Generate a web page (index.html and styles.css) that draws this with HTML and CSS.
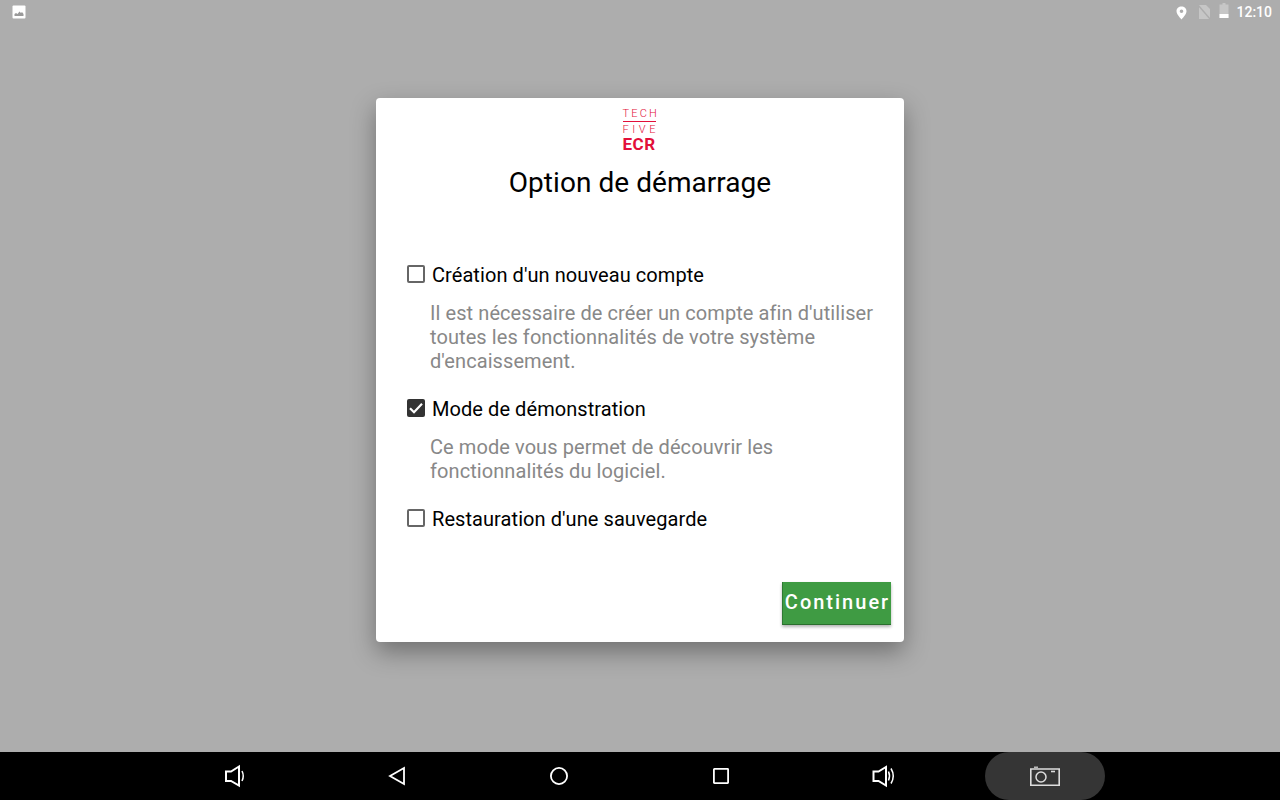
FILE: index.html
```html
<!DOCTYPE html>
<html lang="fr">
<head>
  <meta charset="UTF-8" />
  <meta name="viewport" content="width=device-width, initial-scale=1.0" />
  <title>Option de démarrage</title>
  <link rel="stylesheet" href="styles.css">
</head>
<body>
  <header class="status-bar">
    <svg class="status-photo" width="14" height="14" viewBox="0 0 14 14">
      <rect x="0.5" y="0.5" width="13" height="13" rx="1" fill="#fff"/>
      <path d="M2.5 11 V9 L4 8 L5.5 9 L7.5 6.5 L9 8 L10 7 L11.5 9 V11 Z" fill="#9a9a9a"/>
    </svg>
    <div class="status-right">
      <svg width="12" height="18" viewBox="0 0 12 18">
        <path fill-rule="evenodd" d="M5.5 3.5 C2.7 3.5 0.5 5.5 0.5 8.3 C0.5 11.5 5.5 16.5 5.5 16.5 S10.5 11.5 10.5 8.3 C10.5 5.5 8.3 3.5 5.5 3.5 Z M5.5 6.5 A1.8 1.8 0 1 1 5.5 10.1 A1.8 1.8 0 1 1 5.5 6.5 Z" fill="#fff"/>
      </svg>
      <svg class="status-sim" width="14" height="18" viewBox="0 0 14 18">
        <path d="M2 2 H9 L13 6 V16 H2 Z" fill="#c6c6c6"/>
        <path d="M1 2 L13.5 16.5" stroke="#adadad" stroke-width="1.4"/>
      </svg>
      <svg class="status-battery" width="10" height="18" viewBox="0 0 10 18">
        <path d="M3.5 0 H6.5 V1.5 H9.5 V15 H0.5 V1.5 H3.5 Z" fill="#c6c6c6"/>
        <rect x="0.5" y="11" width="9" height="4" fill="#fff"/>
      </svg>
      <span class="status-time">12:10</span>
    </div>
  </header>

  <main class="screen">
    <section class="dialog">
      <div class="logo">
        <span class="logo-line logo-tech">TECH</span>
        <span class="logo-line logo-five">FIVE</span>
        <span class="logo-ecr">ECR</span>
      </div>
      <h1 class="dialog-title">Option de démarrage</h1>

      <div class="options">
        <label class="option">
          <span class="checkbox"></span>
          <span>Création d'un nouveau compte</span>
        </label>
        <p class="option-text">Il est nécessaire de créer un compte afin d'utiliser toutes les fonctionnalités de votre système d'encaissement.</p>

        <label class="option">
          <span class="checkbox checked">
            <svg width="18" height="18" viewBox="0 0 18 18">
              <path d="M3 9.2 L7 13.2 L15 4.8" fill="none" stroke="#fff" stroke-width="2.2"/>
            </svg>
          </span>
          <span>Mode de démonstration</span>
        </label>
        <p class="option-text">Ce mode vous permet de découvrir les fonctionnalités du logiciel.</p>

        <label class="option">
          <span class="checkbox"></span>
          <span>Restauration d'une sauvegarde</span>
        </label>
      </div>

      <div class="dialog-actions">
        <button class="btn-continue">Continuer</button>
      </div>
    </section>
  </main>

  <nav class="nav-bar">
    <div class="nav-item">
      <svg width="22" height="24" viewBox="0 0 22 24" fill="none" stroke="#fff">
        <path d="M2 7.5 H7 L15 2.5 V21.5 L7 17 H2 Z" stroke-width="2"/>
        <path d="M18 7 Q20.5 12 18 17" stroke-width="1.5"/>
      </svg>
    </div>
    <div class="nav-item">
      <svg width="18" height="20" viewBox="0 0 18 20" fill="none" stroke="#fff" stroke-width="1.8">
        <path d="M2 10 L16 2 V18 Z"/>
      </svg>
    </div>
    <div class="nav-item">
      <svg width="20" height="20" viewBox="0 0 20 20" fill="none" stroke="#fff" stroke-width="1.8">
        <circle cx="10" cy="10" r="8.1"/>
      </svg>
    </div>
    <div class="nav-item">
      <svg width="18" height="18" viewBox="0 0 18 18" fill="none" stroke="#fff" stroke-width="1.8">
        <rect x="1.9" y="1.9" width="14.2" height="14.2" rx="0.5"/>
      </svg>
    </div>
    <div class="nav-item">
      <svg width="26" height="24" viewBox="0 0 26 24" fill="none" stroke="#fff">
        <path d="M3.5 7.5 H8.5 L16 3 V21.5 L8.5 17 H3.5 Z" stroke-width="2"/>
        <path d="M18.5 7.5 Q20.5 12 18.5 16.5" stroke-width="1.5"/>
        <path d="M21 4.5 Q25.5 12 21 19.5" stroke-width="1.5"/>
      </svg>
    </div>
    <div class="nav-pill">
      <svg width="30" height="20" viewBox="0 0 30 20" fill="none" stroke="#ddd">
        <path d="M0.8 3 H29.2 V19.2 H0.8 Z" stroke-width="1.6"/>
        <path d="M4 1.2 H8" stroke-width="1.2"/>
        <circle cx="11" cy="11" r="5" stroke-width="1.5"/>
        <path d="M21 5.5 H25" stroke-width="1.6"/>
      </svg>
    </div>
  </nav>
</body>
</html>
```
FILE: styles.css
```css
* { box-sizing: border-box; margin: 0; padding: 0; }
html, body { height: 100%; }
body {
  width: 1280px;
  height: 800px;
  overflow: hidden;
  display: flex;
  flex-direction: column;
  background: #adadad;
  font-family: Roboto, "Liberation Sans", sans-serif;
  color: #000;
}

.status-bar {
  height: 24px;
  display: flex;
  align-items: center;
  justify-content: space-between;
  padding: 0 8px 0 12px;
}
.status-right {
  display: flex;
  align-items: center;
}
.status-sim { margin-left: 9px; }
.status-battery { margin-left: 8px; }
.status-time {
  margin-left: 7px;
  font-size: 14px;
  font-weight: 500;
  color: #fff;
}

.screen {
  flex: 1;
  display: flex;
  justify-content: center;
  padding-top: 74px;
}
.dialog {
  width: 528px;
  height: 544px;
  display: flex;
  flex-direction: column;
  background: #fff;
  border-radius: 4px;
  box-shadow: 0 10px 24px rgba(0,0,0,0.35);
}

.logo {
  margin: 10px 2px 0 0;
  align-self: center;
  width: 33px;
  display: flex;
  flex-direction: column;
  align-items: center;
  color: #e2103a;
}
.logo-line {
  white-space: nowrap;
  font-size: 11px;
  line-height: 11px;
  font-weight: 300;
}
.logo-tech {
  width: 100%;
  letter-spacing: 2.2px;
  border-bottom: 1px solid #e2103a;
  padding-bottom: 2px;
  margin-bottom: 2px;
}
.logo-five {
  width: 100%;
  letter-spacing: 3.6px;
}
.logo-ecr {
  margin-top: 2px;
  font-size: 17px;
  line-height: 15px;
  font-weight: 700;
  letter-spacing: 0.5px;
}

.dialog-title {
  margin-top: 13px;
  text-align: center;
  font-size: 28px;
  line-height: 36px;
  font-weight: 400;
  letter-spacing: 0.05px;
}

.options {
  margin-top: 62px;
  padding: 0 20px 0 31px;
  flex: 1;
}
.option {
  display: flex;
  align-items: center;
  gap: 7px;
  height: 24px;
  font-size: 20px;
  line-height: 24px;
  letter-spacing: 0.07px;
}
.checkbox {
  width: 18px;
  height: 18px;
  flex: none;
  margin-top: -2px;
  border: 2px solid #666;
  border-radius: 2px;
}
.checkbox.checked {
  border: 0;
  background: #333;
}
.checkbox svg { display: block; }
.option-text {
  margin: 14px 0 24px 23px;
  max-width: 450px;
  font-size: 20px;
  line-height: 24px;
  letter-spacing: 0.08px;
  color: #888;
}

.dialog-actions {
  display: flex;
  justify-content: flex-end;
  padding: 0 13px 17px 0;
}
.btn-continue {
  width: 109px;
  height: 43px;
  padding: 0 0 2px 1px;
  border: 0;
  border-left: 1px solid #2f7a33;
  border-bottom: 1px solid #2a6e2d;
  background: #3f9b43;
  color: #fff;
  font-family: inherit;
  font-size: 20px;
  font-weight: 500;
  letter-spacing: 2px;
  white-space: nowrap;
  box-shadow: 0 2px 3px rgba(0,0,0,0.3);
}

.nav-bar {
  height: 48px;
  flex: none;
  display: flex;
  align-items: center;
  padding-left: 154px;
  background: #000;
}
.nav-item {
  width: 162px;
  display: flex;
  justify-content: center;
}
.nav-pill {
  width: 120px;
  height: 48px;
  margin-left: 21px;
  display: flex;
  align-items: center;
  justify-content: center;
  border-radius: 24px;
  background: #353535;
}
```
